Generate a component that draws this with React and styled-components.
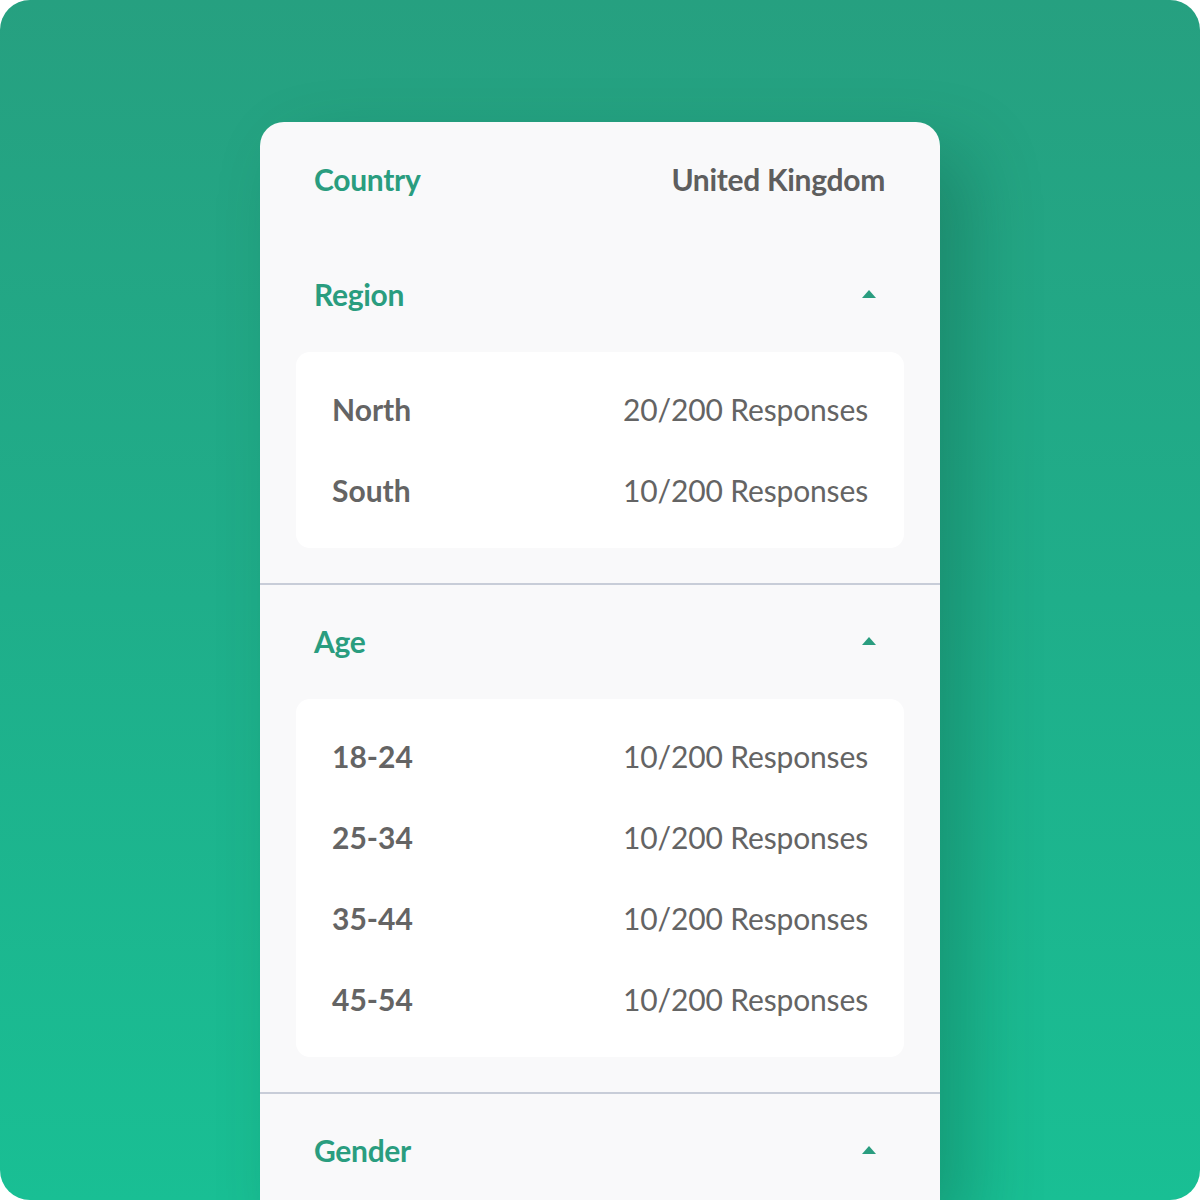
import React from "react";
import styled, { createGlobalStyle } from "styled-components";

const GlobalStyle = createGlobalStyle`
  html, body {
    margin: 0;
    padding: 0;
    background: #ffffff;
  }
  body {
    font-family: Lato, "Open Sans", sans-serif;
  }
`;

const Frame = styled.div`
  width: 1200px;
  height: 1200px;
  border-radius: 30px;
  overflow: hidden;
  background: linear-gradient(180deg, #26a080 0%, #1fae8a 50%, #19bf94 100%);
  display: flex;
  justify-content: center;
  padding-top: 122px;
  box-sizing: border-box;
`;

const Card = styled.div`
  width: 680px;
  align-self: flex-start;
  background: #f9f9fa;
  border-radius: 24px 24px 0 0;
  box-shadow: 30px 30px 70px rgba(10, 70, 50, 0.28);
  display: flex;
  flex-direction: column;
`;

const TopRow = styled.div`
  height: 116px;
  padding: 0 55px 3px 54px;
  box-sizing: border-box;
  display: flex;
  align-items: center;
  justify-content: space-between;
`;

const Label = styled.span`
  color: #2a9d7f;
  font-size: 30px;
  font-weight: 700;
  letter-spacing: -0.3px;
`;

const TopValue = styled.span`
  color: #5e5e5e;
  font-size: 30px;
  font-weight: 700;
  letter-spacing: -0.3px;
`;

const Section = styled.div`
  padding-bottom: ${p => (p.last ? "0" : "35px")};
  border-bottom: ${p => (p.last ? "none" : "2px solid #c8cdd8")};
`;

const SectionHeader = styled.div`
  height: 114px;
  padding: 0 64px 3px 54px;
  box-sizing: border-box;
  display: flex;
  align-items: center;
  justify-content: space-between;
`;

const Caret = styled.span`
  width: 0;
  height: 0;
  border-left: 7px solid transparent;
  border-right: 7px solid transparent;
  border-bottom: 8px solid #2a9d7f;
`;

const Box = styled.div`
  margin: 0 36px;
  padding: 17px 36px 17px 36px;
  background: #ffffff;
  border-radius: 14px;
`;

const Row = styled.div`
  height: 81px;
  padding-bottom: 2px;
  box-sizing: border-box;
  display: flex;
  align-items: center;
  justify-content: space-between;
  color: #646464;
  font-size: 30px;
`;

const RowName = styled.span`
  font-weight: 700;
`;

const RowValue = styled.span`
  font-weight: 400;
  letter-spacing: -0.15px;
`;

const sections = [
  {
    title: "Region",
    rows: [
      ["North", "20/200 Responses"],
      ["South", "10/200 Responses"],
    ],
  },
  {
    title: "Age",
    rows: [
      ["18-24", "10/200 Responses"],
      ["25-34", "10/200 Responses"],
      ["35-44", "10/200 Responses"],
      ["45-54", "10/200 Responses"],
    ],
  },
  {
    title: "Gender",
    rows: [],
  },
];

const App = () => (
  <>
    <GlobalStyle />
    <Frame>
      <Card>
        <TopRow>
          <Label>Country</Label>
          <TopValue>United Kingdom</TopValue>
        </TopRow>
        {sections.map((s, i) => (
          <Section key={s.title} last={i === sections.length - 1}>
            <SectionHeader>
              <Label>{s.title}</Label>
              <Caret />
            </SectionHeader>
            {s.rows.length > 0 && (
              <Box>
                {s.rows.map(([name, value]) => (
                  <Row key={name}>
                    <RowName>{name}</RowName>
                    <RowValue>{value}</RowValue>
                  </Row>
                ))}
              </Box>
            )}
          </Section>
        ))}
      </Card>
    </Frame>
  </>
);

export default App;
